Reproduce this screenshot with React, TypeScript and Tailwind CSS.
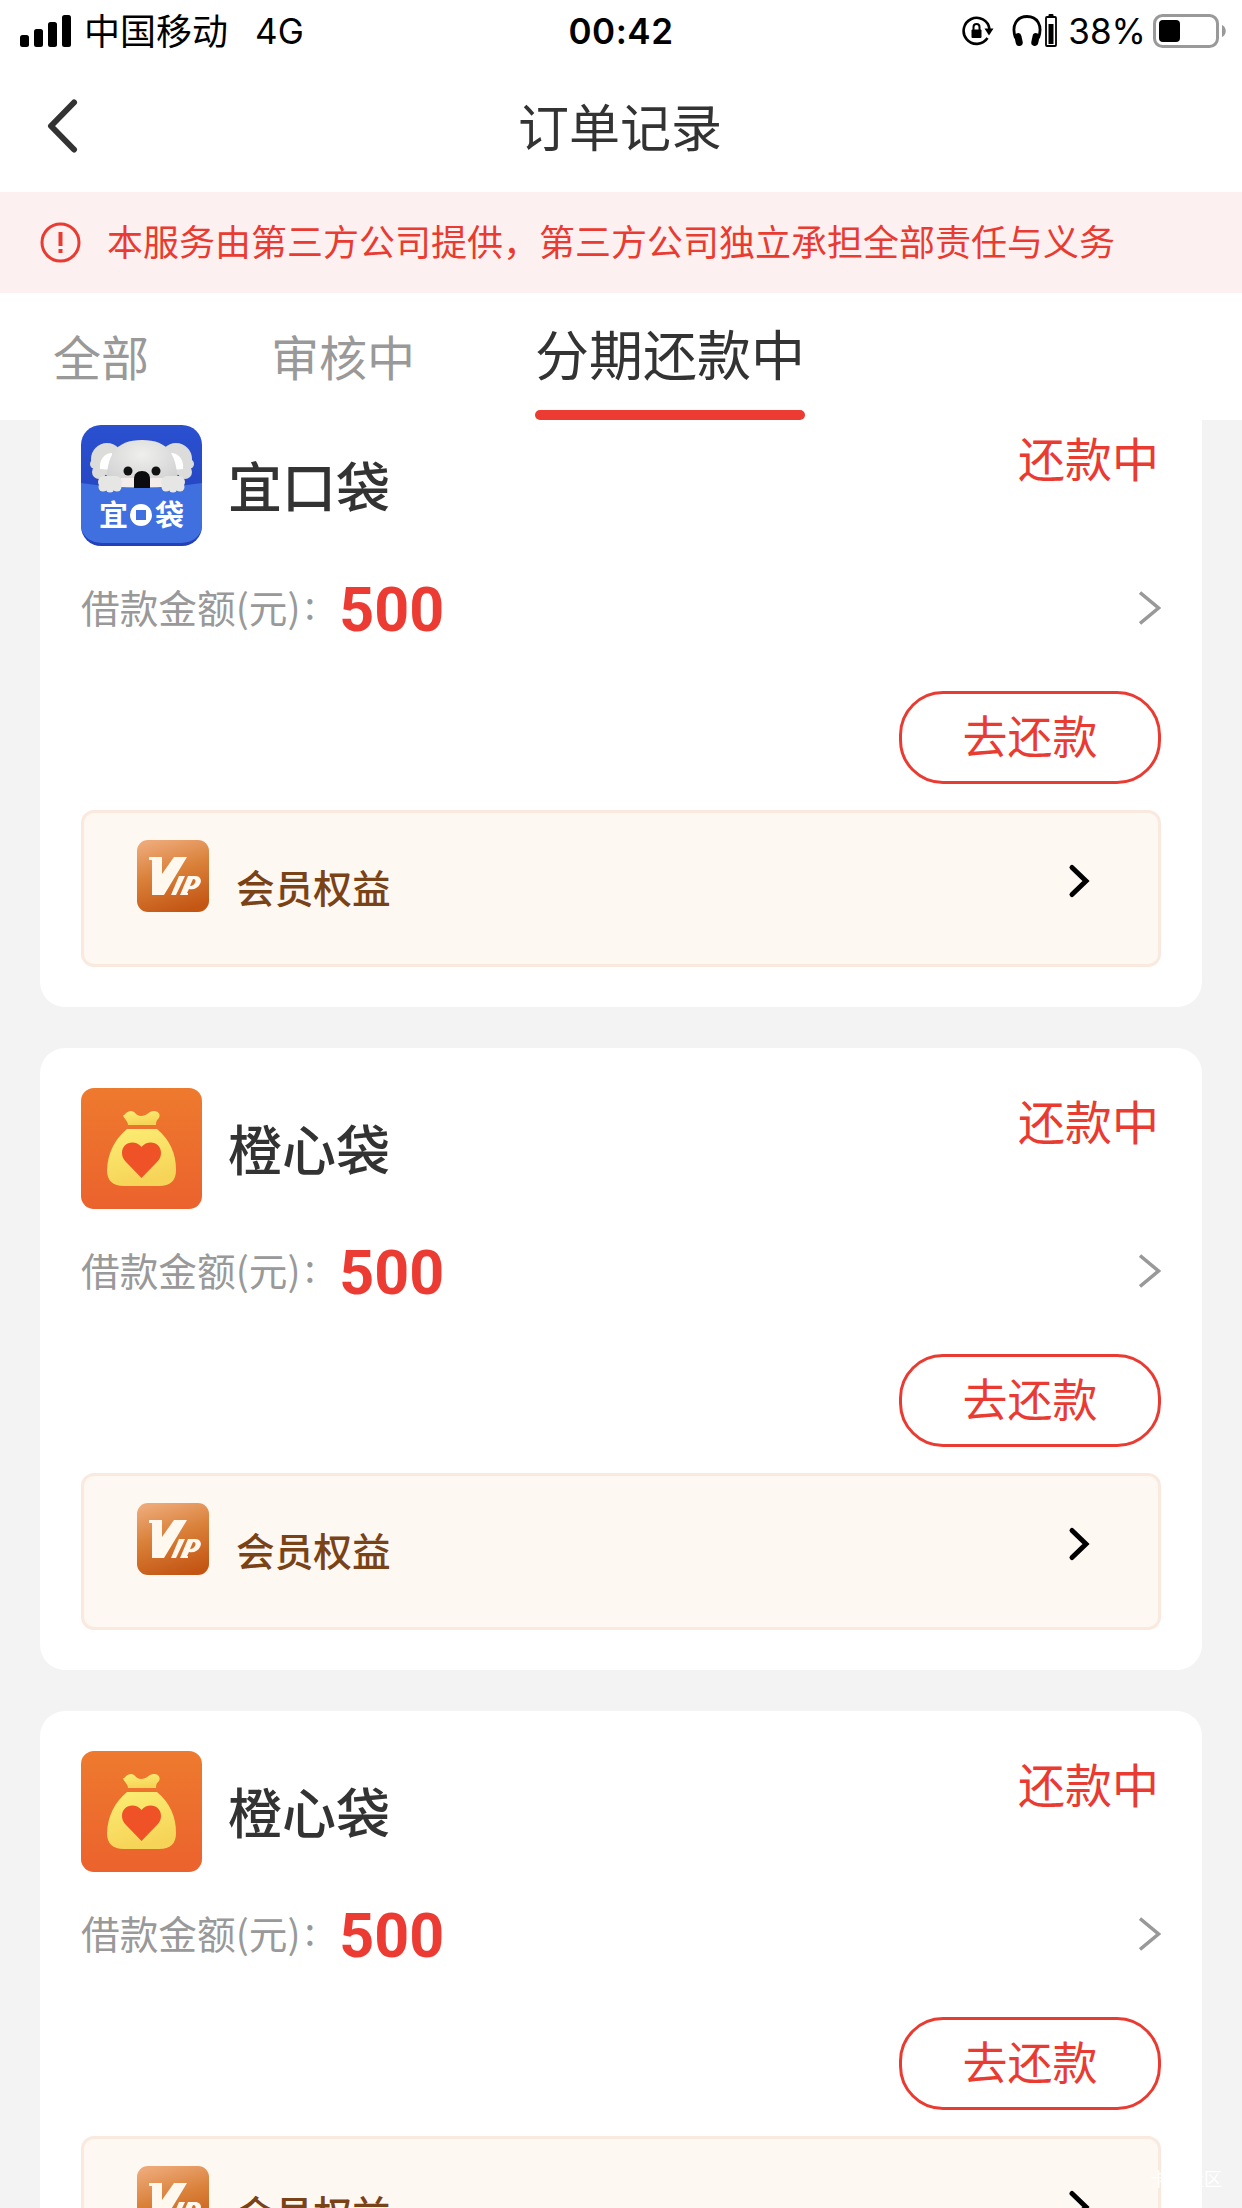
import type { ReactNode } from 'react'

const FONT = "font-['Noto_Sans_CJK_SC',sans-serif]"
const LATIN = "font-['Inter','Noto_Sans_CJK_SC',sans-serif]"

type Order = {
  id: number
  name: string
  amount: number
  logo: ReactNode
}

function KoalaLogo() {
  return (
    <svg viewBox="0 0 121 121" className="w-[121px] h-[121px] rounded-[20px] shrink-0">
      <defs>
        <linearGradient id="koalaBg" x1="0" y1="0" x2="0" y2="1">
          <stop offset="0" stopColor="#2a50d0" />
          <stop offset="1" stopColor="#2340ba" />
        </linearGradient>
        <radialGradient id="koalaHead" cx=".5" cy=".3" r=".7">
          <stop offset="0" stopColor="#efefed" />
          <stop offset="1" stopColor="#cfcfd0" />
        </radialGradient>
      </defs>
      <rect width="121" height="121" fill="url(#koalaBg)" />
      <g fill="#dcdcdb">
        <circle cx="26" cy="34" r="16" />
        <circle cx="14" cy="39" r="5" />
        <circle cx="18" cy="47" r="7" />
        <circle cx="95" cy="34" r="16" />
        <circle cx="108" cy="39" r="5" />
        <circle cx="104" cy="47" r="7" />
      </g>
      <path d="M19 44c-1-9 4-16 12-16v17z" fill="#fff" />
      <path d="M102 44c1-9-4-16-12-16v17z" fill="#fff" />
      <path d="M25 60C26 30 34 15 61 15s35 15 36 45v4H25z" fill="url(#koalaHead)" />
      <path d="M40 53h42v10H40z" fill="#f3ecea" />
      <circle cx="47" cy="46" r="4.500" fill="#111" />
      <circle cx="75" cy="46" r="4.500" fill="#111" />
      <path d="M0 58Q60 67 121 58V102Q118 117 100 118H21Q3 117 0 102z" fill="#4070df" />
      <path d="M53 54c0-5 3-8 8-8s8 3 8 8v9H53z" fill="#0c0c0e" />
      <g fill="#e6e6e4">
        <rect x="17" y="51" width="24" height="12" rx="6" />
        <circle cx="22" cy="62" r="4.500" />
        <circle cx="29" cy="63" r="4.500" />
        <circle cx="36" cy="62" r="4.500" />
        <rect x="80" y="51" width="24" height="12" rx="6" />
        <circle cx="85" cy="62" r="4.500" />
        <circle cx="92" cy="63" r="4.500" />
        <circle cx="99" cy="62" r="4.500" />
      </g>
      <text x="18" y="101" fontSize="29" fontWeight="700" fill="#fff">宜</text>
      <path fillRule="evenodd" d="M60 79a11 11 0 1 1 0 22 11 11 0 0 1 0-22zm-5 6v10h10V85z" fill="#fff" />
      <text x="74" y="101" fontSize="29" fontWeight="700" fill="#fff">袋</text>
    </svg>
  )
}

function BagLogo() {
  return (
    <svg viewBox="0 0 121 121" className="w-[121px] h-[121px] rounded-[13px] shrink-0">
      <defs>
        <linearGradient id="bagBg" x1="0" y1="0" x2="0" y2="1">
          <stop offset="0" stopColor="#ee7a2e" />
          <stop offset="1" stopColor="#eb622d" />
        </linearGradient>
        <linearGradient id="bagBody" x1="0" y1="0" x2=".3" y2="1">
          <stop offset="0" stopColor="#fbee74" />
          <stop offset="1" stopColor="#f6d458" />
        </linearGradient>
      </defs>
      <rect width="121" height="121" fill="url(#bagBg)" />
      <path d="M42 27c2 1 3-4 8-4 4 0 5 5 10 5 6 0 8-5 13-5 4 0 7 3 5 7-2 2-3 3-3 7H47c0-4-4-6-5-10z" fill="url(#bagBody)" />
      <path d="M46 41h30q19 16 19 41q0 16-17 16H43q-17 0-17-16Q27 57 46 41z" fill="url(#bagBody)" />
      <path d="M60.500 90 45 74c-3-3-4-6-4-9 0-11 13-14 19.500-6C67 51 80 54 80 65c0 3-1 6-4 9z" fill="#ee5226" />
    </svg>
  )
}

function VipIcon() {
  return (
    <svg viewBox="0 0 72 72" className="w-[72px] h-[72px] rounded-[11px] shrink-0">
      <defs>
        <linearGradient id="vipBg" x1=".3" y1="0" x2=".6" y2="1">
          <stop offset="0" stopColor="#eda876" />
          <stop offset=".45" stopColor="#d98039" />
          <stop offset="1" stopColor="#c45614" />
        </linearGradient>
      </defs>
      <rect width="72" height="72" fill="url(#vipBg)" />
      <g fill="#fff8ef">
        <path d="M12 17h13v17l12-17h13L27 55H15V20h-3z" />
        <path d="M42 36h6L39 55h-5z" />
        <path fillRule="evenodd" d="M51 36h7c6 0 7 5 5 8-2 4-6 6-11 5l-2 4h1v2h-8zm5 3-3 7c5 0 8-7 3-7z" />
      </g>
    </svg>
  )
}

function StatusBar() {
  return (
    <div className={`grid grid-cols-3 items-center h-16 px-5 pb-[2px] text-black text-[36px] leading-none ${LATIN}`}>
      <div className="flex items-center">
        <svg viewBox="0 0 51 32" className="w-[51px] h-8">
          <rect x="0" y="20" width="9" height="12" rx="2.500" />
          <rect x="14" y="14" width="9" height="18" rx="2.500" />
          <rect x="28" y="7" width="9" height="25" rx="2.500" />
          <rect x="42" y="0" width="9" height="32" rx="2.500" />
        </svg>
        <span className="ml-[13px] pt-[2px]">中国移动</span>
        <span className="ml-[27px] text-[35px]">4G</span>
      </div>
      <div className="text-center text-[35px] font-semibold tracking-[0.5px]">00:42</div>
      <div className="flex items-center justify-end -mr-[5px]">
        <svg viewBox="0 0 32 34" className="w-8 h-[34px]" fill="none" stroke="#000" strokeWidth="2.600">
          <path d="M25.500 24A13 13 0 1 1 27.500 15" />
          <path d="M22.500 14.500h9L27 21.500z" fill="#000" stroke="none" />
          <rect x="9.500" y="15.500" width="10" height="8.500" rx="1" fill="#000" stroke="none" />
          <path d="M11.500 16v-3a3 3 0 0 1 6 0v3" strokeWidth="2" />
        </svg>
        <svg viewBox="0 0 30 34" className="w-[30px] h-[34px] ml-[18px]" fill="none" stroke="#000" strokeWidth="2.800">
          <path d="M3.500 24C-1 11 5 2.500 15 2.500S31 11 26.500 24" />
          <rect x="3" y="19" width="7" height="13" rx="3.500" fill="#000" stroke="none" transform="rotate(-12 7 25)" />
          <rect x="20" y="19" width="7" height="13" rx="3.500" fill="#000" stroke="none" transform="rotate(12 23 25)" />
        </svg>
        <svg viewBox="0 0 12 36" className="w-3 h-9 ml-[3px]">
          <rect x="3.500" y="1" width="5" height="3" rx="1" />
          <rect x="1" y="4" width="10" height="29" rx="1" fill="none" stroke="#000" strokeWidth="1.800" />
          <rect x="3.500" y="11" width="5" height="20" />
        </svg>
        <span className="ml-[11px] text-[35px]">38%</span>
        <svg viewBox="0 0 74 34" className="w-[74px] h-[34px] ml-[7px]">
          <rect x="1.500" y="1.500" width="63" height="31" rx="8" fill="none" stroke="#999" strokeWidth="3" />
          <rect x="6" y="6" width="21" height="22" rx="4" />
          <path d="M69 11c5 2 5 10 0 12z" fill="#999" />
        </svg>
      </div>
    </div>
  )
}

function NavBar() {
  return (
    <div className="grid grid-cols-[1fr_auto_1fr] items-center h-32 pl-[47px] pr-[49px] pb-[4px]">
      <svg viewBox="0 0 31 54" className="w-[31px] h-[54px]" fill="none" stroke="#333" strokeWidth="6" strokeLinecap="round" strokeLinejoin="round">
        <path d="M27 3.500 4 27l23 23.500" />
      </svg>
      <h1 className="pb-[2px] text-[51px] leading-none text-[#333]">订单记录</h1>
    </div>
  )
}

function Notice() {
  return (
    <div className="flex items-center h-[101px] pl-10 bg-[#fcf1f0] text-[#e93b31]">
      <svg viewBox="0 0 41 41" className="w-[41px] h-[41px] shrink-0" fill="none" stroke="currentColor" strokeWidth="3">
        <circle cx="20.500" cy="20.500" r="18.500" />
        <path d="M20.500 10v14M20.500 27v4" strokeWidth="4" />
      </svg>
      <p className="ml-[26px] pb-[6px] text-[36px] leading-none whitespace-nowrap">
        本服务由第三方公司提供，第三方公司独立承担全部责任与义务
      </p>
    </div>
  )
}

function Tabs() {
  return (
    <div className="flex items-end h-[127px] pl-[53px] bg-white text-[#999] text-[48px] leading-none">
      <span className="pb-[41px]">全部</span>
      <span className="ml-[122px] pb-[41px]">审核中</span>
      <span className="ml-[120px] flex flex-col text-[54px] text-[#333]">
        <span className="pb-[30px]">分期还款中</span>
        <span className="h-[10px] rounded-[5px] bg-[#ec3b32]" />
      </span>
    </div>
  )
}

function OrderCard({ order }: { order: Order }) {
  return (
    <div className="h-[622px] shrink-0 rounded-[25px] bg-white px-[41px] pt-10">
      <div className="flex items-start">
        {order.logo}
        <h2 className="ml-[26px] mt-[33px] text-[54px] leading-none font-medium text-[#333]">{order.name}</h2>
        <span className="ml-auto mr-[2px] mt-[8px] text-[47px] leading-none text-[#e93b31]">还款中</span>
      </div>
      <div className="flex items-center h-[60px] mt-[33px]">
        <span className="pb-[5px] text-[38.700px] leading-none text-[#999]">借款金额(元)</span>
        <span className="ml-[4px] pb-[11px] text-[38.700px] leading-none text-[#999]">:</span>
        <span className="ml-[24px] pt-[3px] font-['Roboto'] text-[61px] leading-none font-bold text-[#ec3b32]">{order.amount}</span>
        <svg viewBox="0 0 22 34" className="ml-auto mb-[2px] w-[22px] h-[34px]" fill="none" stroke="#999" strokeWidth="3.500">
          <path d="M1 1.500 19.500 17 1 32.500" />
        </svg>
      </div>
      <div className="flex justify-end mt-[52px]">
        <button className="w-[262px] h-[93px] pb-[7px] rounded-[44px] border-3 border-[#e93b31] text-[45px] leading-none text-[#e93b31]">
          去还款
        </button>
      </div>
      <div className="flex items-start h-[157px] mt-[26px] pl-[53px] pr-[68px] pt-[27px] rounded-[13px] border-3 border-[#fae9de] bg-[#fef8f2]">
        <VipIcon />
        <span className="ml-[27px] mt-[27px] text-[38.700px] leading-none font-medium text-[#7a4217]">会员权益</span>
        <svg viewBox="0 0 22 36" className="ml-auto mt-[23px] w-[22px] h-9" fill="none" stroke="#000" strokeWidth="5" strokeLinecap="round">
          <path d="M4 4.500l14 13.500L4 31.500" />
        </svg>
      </div>
    </div>
  )
}

const orders: Order[] = [
  { id: 1, name: '宜口袋', amount: 500, logo: <KoalaLogo /> },
  { id: 2, name: '橙心袋', amount: 500, logo: <BagLogo /> },
  { id: 3, name: '橙心袋', amount: 500, logo: <BagLogo /> },
]

export default function App() {
  return (
    <div className={`relative flex flex-col w-[1242px] h-[2208px] overflow-hidden bg-[#f3f3f3] ${FONT}`}>
      <header className="relative z-10 bg-white">
        <StatusBar />
        <NavBar />
        <Notice />
        <Tabs />
      </header>
      {/* list is scrolled a little, the first card slides under the tabs */}
      <main className="flex flex-col gap-[41px] px-10 -mt-[35px]">
        {orders.map((order) => (
          <OrderCard key={order.id} order={order} />
        ))}
      </main>
      <span className="absolute right-5 bottom-[21px] text-[18px] leading-none text-white">卡农社区</span>
    </div>
  )
}
